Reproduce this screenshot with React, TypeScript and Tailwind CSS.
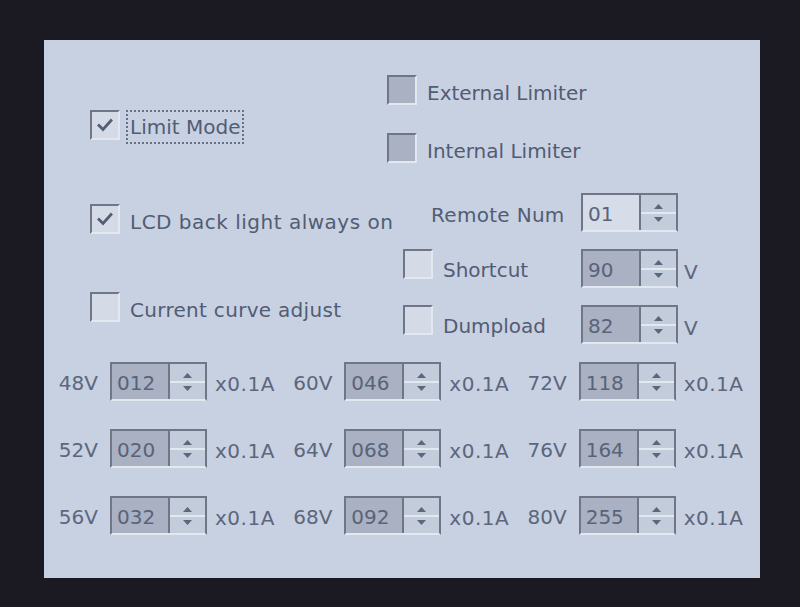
import React from 'react';

const Check = () => (
  <svg width="18" height="16" viewBox="0 0 18 16" fill="none">
    <path d="M3 8.5 L7 12.5 L15 3.5" stroke="#535d74" strokeWidth="2.8" strokeLinecap="square" />
  </svg>
);

const Box = ({ checked, dim }: { checked?: boolean; dim?: boolean }) => (
  <div
    className={`w-[30px] h-[30px] shrink-0 flex items-center justify-center border-2 border-t-[#6e7688] border-l-[#6e7688] border-b-[#e3e8f0] border-r-[#e3e8f0] ${
      dim ? 'bg-[#a9b1c2]' : 'bg-[#d4dbe7]'
    }`}
  >
    {checked && <Check />}
  </div>
);

const Spin = ({ value, light }: { value: string; light?: boolean }) => (
  <div className="flex w-[97px] h-[39px] shrink-0 border-2 border-t-[#6e7688] border-l-[#6e7688] border-r-[#6e7688] border-b-[#e3e8f0] bg-[#c3ccdb]">
    <div
      className={`w-[58px] pl-[5px] pt-[2px] flex items-center text-[20px] text-[#59637a] border-r-2 border-r-[#6e7688] ${
        light ? 'bg-[#d6dde8]' : 'bg-[#a9b1c2]'
      }`}
    >
      {value}
    </div>
    <div className="flex-1 flex flex-col">
      <div className="flex-1 flex items-end justify-center pb-[3px]">
        <svg width="9" height="5" viewBox="0 0 9 5">
          <path d="M4.5 0 L9 5 L0 5 Z" fill="#5c667c" />
        </svg>
      </div>
      <div className="h-[2px] bg-[#e3e8f0]" />
      <div className="flex-1 flex items-start justify-center pt-[3px]">
        <svg width="9" height="5" viewBox="0 0 9 5">
          <path d="M0 0 L9 0 L4.5 5 Z" fill="#5c667c" />
        </svg>
      </div>
    </div>
  </div>
);

const rows = [
  [
    ['48V', '012'],
    ['60V', '046'],
    ['72V', '118'],
  ],
  [
    ['52V', '020'],
    ['64V', '068'],
    ['76V', '164'],
  ],
  [
    ['56V', '032'],
    ['68V', '092'],
    ['80V', '255'],
  ],
];

export default function App() {
  return (
    <div className="w-[800px] h-[607px] bg-[#1b1a22] pt-[40px] pl-[44px] font-['DejaVu_Sans',sans-serif] text-[20px] text-[#525c73]">
      <div className="w-[716px] h-[538px] bg-[#c7d1e2] flex flex-col">
        <div className="flex">
          {/* left column */}
          <div className="w-[343px] pl-[46px] flex flex-col">
            <div className="mt-[70px] h-[30px] flex items-center">
              <Box checked />
              <div className="ml-[6px] mt-[4px] px-[2px] h-[34px] flex items-center border-2 border-dotted border-[#68718a]">
                Limit Mode
              </div>
            </div>
            <div className="mt-[64px] h-[30px] flex items-center">
              <Box checked />
              <span className="ml-[10px] mt-[6px] whitespace-nowrap tracking-[0.5px]">LCD back light always on</span>
            </div>
            <div className="mt-[58px] h-[30px] flex items-center">
              <Box />
              <span className="ml-[10px] mt-[6px] whitespace-nowrap tracking-[0.3px]">Current curve adjust</span>
            </div>
          </div>

          {/* right column */}
          <div className="flex-1 flex flex-col">
            <div className="mt-[35px] h-[30px] flex items-center">
              <Box dim />
              <span className="ml-[10px] mt-[6px]">External Limiter</span>
            </div>
            <div className="mt-[28px] h-[30px] flex items-center">
              <Box dim />
              <span className="ml-[10px] mt-[6px]">Internal Limiter</span>
            </div>
            <div className="mt-[30px] h-[39px] flex items-center pl-[44px]">
              <span className="w-[150px] mt-[4px] tracking-[0.3px]">Remote Num</span>
              <Spin value="01" light />
            </div>
            <div className="mt-[17px] h-[39px] flex items-center pl-[16px]">
              <div className="self-start">
                <Box />
              </div>
              <span className="ml-[10px] mt-[2px] w-[138px]">Shortcut</span>
              <Spin value="90" />
              <span className="ml-[6px] mt-[6px] text-[#5c667c]">V</span>
            </div>
            <div className="mt-[17px] h-[39px] flex items-center pl-[16px]">
              <div className="self-start">
                <Box />
              </div>
              <span className="ml-[10px] mt-[2px] w-[138px]">Dumpload</span>
              <Spin value="82" />
              <span className="ml-[6px] mt-[6px] text-[#5c667c]">V</span>
            </div>
          </div>
        </div>

        {/* current table */}
        <div className="mt-[18px] pl-[13px] flex flex-col gap-[28px] text-[#5c667c]">
          {rows.map((row, i) => (
            <div key={i} className="flex h-[39px] items-center">
              {row.map(([label, val]) => (
                <div key={label} className="flex items-center w-[236px]">
                  <span className="w-[53px] pr-[12px] mt-[2px] text-right">{label}</span>
                  <Spin value={val} />
                  <span className="pl-[8px] mt-[4px] tracking-[0.5px]">x0.1A</span>
                </div>
              ))}
            </div>
          ))}
        </div>
      </div>
    </div>
  );
}
